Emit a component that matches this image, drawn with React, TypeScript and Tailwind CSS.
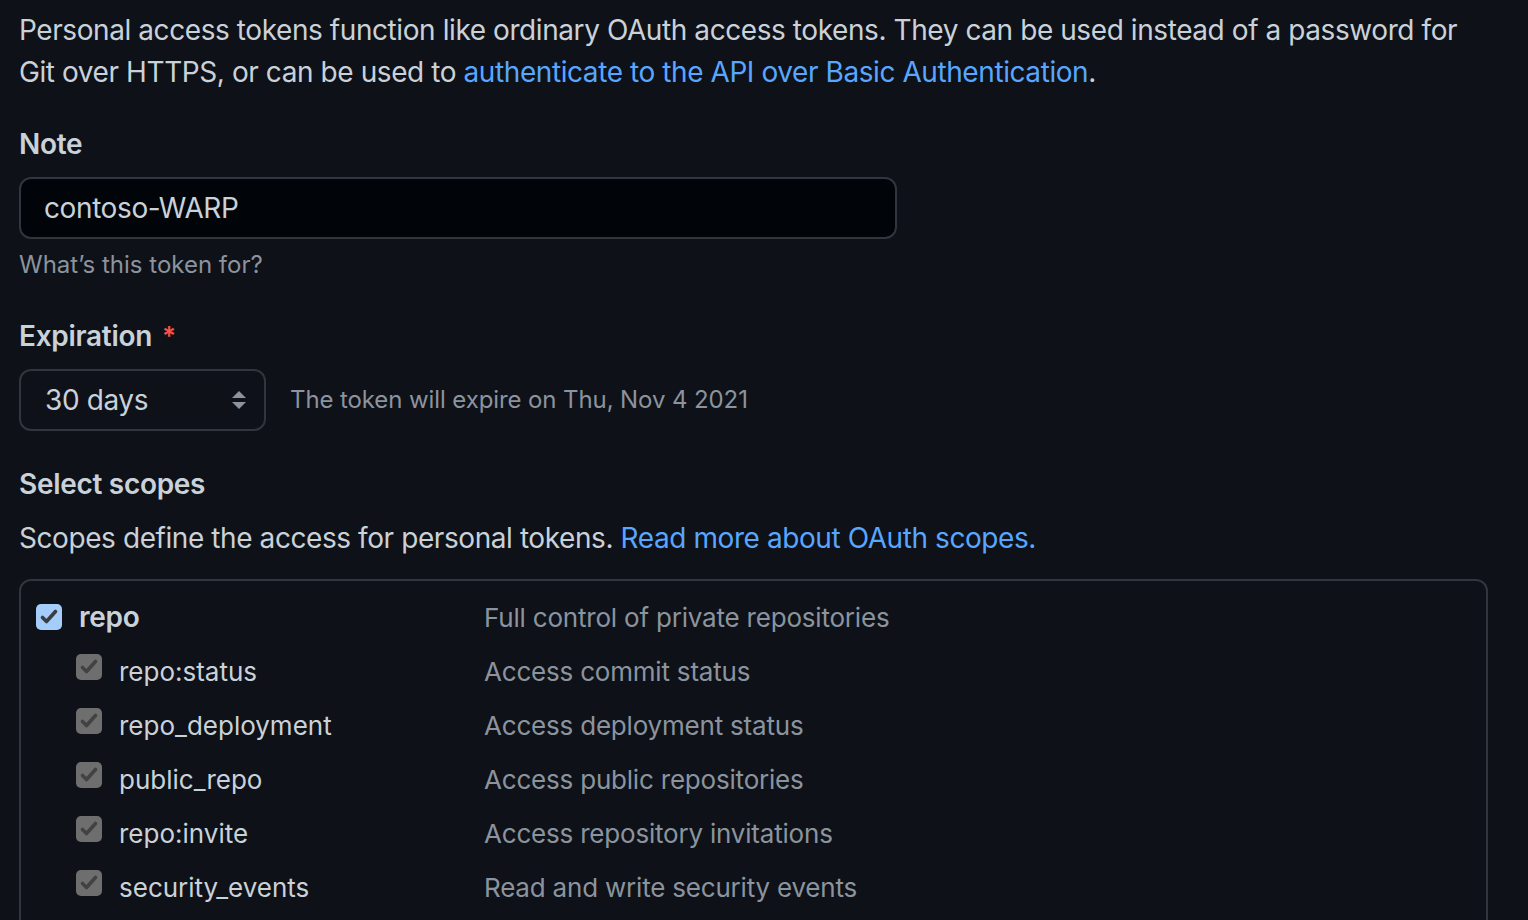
import React from "react";

const scopes = [
  { name: "repo:status", desc: "Access commit status" },
  { name: "repo_deployment", desc: "Access deployment status" },
  { name: "public_repo", desc: "Access public repositories" },
  { name: "repo:invite", desc: "Access repository invitations" },
  { name: "security_events", desc: "Read and write security events" },
];

function Check({ main }: { main?: boolean }) {
  return (
    <div
      className={
        main
          ? "w-[26px] h-[26px] rounded-[5px] bg-[#a5cdfb] shrink-0"
          : "w-[26px] h-[26px] rounded-[5px] bg-[#6e6e6e] shrink-0 -mt-[8px]"
      }
    >
      <svg width="26" height="26" viewBox="0 0 26 26" fill="none">
        <path d="M6.5 13.5 L10.5 17.5 L19.5 7.5" stroke={main ? "#3b3d40" : "#424242"} strokeWidth="3.6" strokeLinecap="round" strokeLinejoin="round" />
      </svg>
    </div>
  );
}

export default function App() {
  return (
    <div
      className="w-[1528px] h-[920px] overflow-hidden bg-[#0e1117] text-[#c9d1d9] pl-[19px] pt-[9px]"
      style={{ fontFamily: "Inter, 'Noto Sans', sans-serif" }}
    >
      <p className="text-[28px] leading-[42px] tracking-[-0.42px]">
        Personal access tokens function like ordinary OAuth access tokens. They can be used instead of a password for
        <br />
        Git over HTTPS, or can be used to{" "}
        <span className="text-[#58a6ff]">authenticate to the API over Basic Authentication</span>.
      </p>

      {/* Note */}
      <div className="mt-[30px] text-[28px] leading-[42px] font-semibold tracking-[-0.3px]">Note</div>
      <div className="mt-[12px] w-[878px] h-[62px] rounded-[12px] border-2 border-[#30363d] bg-[#010409] flex items-center pl-[23px] text-[28px] tracking-[-0.4px]">
        contoso-WARP
      </div>
      <div className="mt-[8px] text-[24px] leading-[36px] text-[#8b949e]">What’s this token for?</div>

      {/* Expiration */}
      <div className="mt-[32px] text-[28px] leading-[42px] font-semibold tracking-[-0.3px] flex items-center">
        Expiration
        <span className="ml-[10px] text-[#f85149] text-[26px]">*</span>
      </div>
      <div className="mt-[12px] flex items-center">
        <div className="w-[247px] h-[62px] rounded-[12px] border-2 border-[#30363d] flex items-center justify-between pl-[24px] pr-[16px] text-[28px] tracking-[-0.4px]">
          <span>30 days</span>
          <svg width="18" height="24" viewBox="0 0 18 24" fill="#8b949e">
            <path d="M9 3 L16 10 H2 Z" />
            <path d="M9 21 L2 14 H16 Z" />
          </svg>
        </div>
        <span className="ml-[24px] text-[24px] text-[#8b949e] tracking-[-0.1px]">The token will expire on Thu, Nov 4 2021</span>
      </div>

      {/* Scopes */}
      <div className="mt-[32px] text-[28px] leading-[42px] font-semibold tracking-[-0.3px]">Select scopes</div>
      <p className="mt-[12px] text-[28px] leading-[42px] tracking-[-0.42px]">
        Scopes define the access for personal tokens.{" "}
        <span className="text-[#58a6ff]">Read more about OAuth scopes.</span>
      </p>

      <div className="mt-[20px] w-[1469px] rounded-[12px] border-2 border-[#30363d] pl-[15px] pt-[9px] pb-[20px]">
        <div className="flex items-center h-[54px]">
          <div className="w-[448px] flex items-center">
            <Check main />
            <span className="ml-[17px] text-[28px] font-semibold tracking-[-0.3px]">repo</span>
          </div>
          <span className="text-[26px] text-[#8b949e] tracking-[-0.2px]">Full control of private repositories</span>
        </div>
        {scopes.map((s) => (
          <div key={s.name} className="flex items-center h-[54px]">
            <div className="w-[448px] flex items-center pl-[40px]">
              <Check />
              <span className="ml-[17px] text-[26px]">{s.name}</span>
            </div>
            <span className="text-[26px] text-[#8b949e] tracking-[-0.2px]">{s.desc}</span>
          </div>
        ))}
      </div>
    </div>
  );
}
